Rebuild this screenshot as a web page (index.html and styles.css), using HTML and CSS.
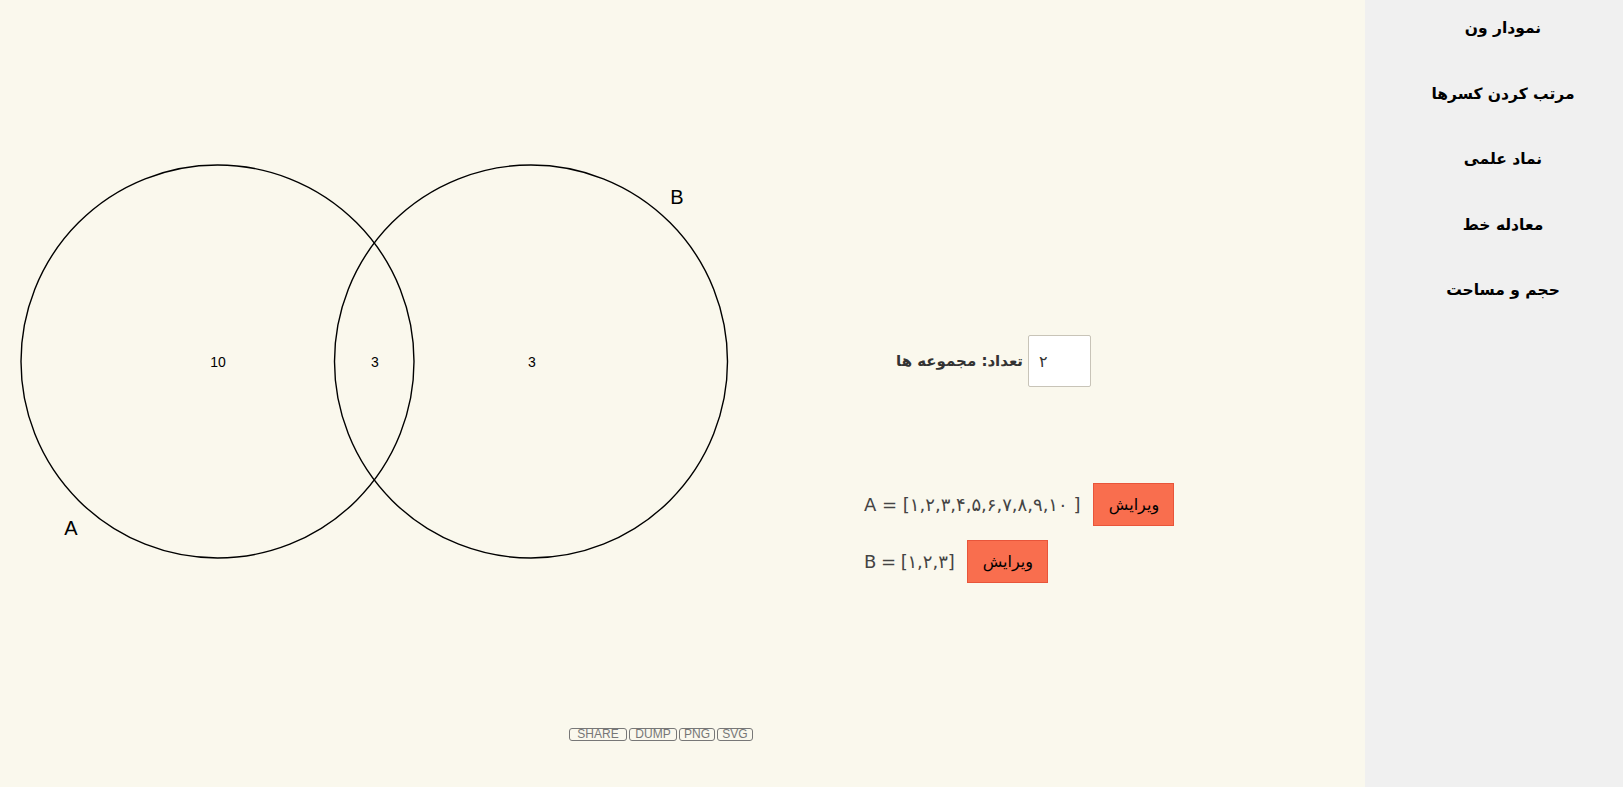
FILE: index.html
```html
<!DOCTYPE html>
<html lang="fa">
<head>
<meta charset="utf-8">
<title>نمودار ون</title>
<link rel="stylesheet" href="styles.css">
</head>
<body>
<div class="page">
  <main class="main">
    <section class="diagram">
      <svg class="venn" width="864" height="720" viewBox="0 0 864 720" xmlns="http://www.w3.org/2000/svg">
        <circle cx="217.5" cy="361.5" r="196.5" fill="none" stroke="#000" stroke-width="1.4"/>
        <circle cx="531" cy="361.5" r="196.5" fill="none" stroke="#000" stroke-width="1.4"/>
        <text x="218" y="367" class="count">10</text>
        <text x="375" y="367" class="count">3</text>
        <text x="532" y="367" class="count">3</text>
        <text x="71" y="535" class="setname">A</text>
        <text x="677" y="204" class="setname">B</text>
      </svg>
      <div class="toolbar">
        <button class="tool w58">SHARE</button>
        <button class="tool w48">DUMP</button>
        <button class="tool w36">PNG</button>
        <button class="tool w36">SVG</button>
      </div>
    </section>
    <section class="controls">
      <div class="count-row">
        <label class="count-label" dir="rtl">تعداد: مجموعه ها</label>
        <input class="count-input" type="text" value="۲">
      </div>
      <div class="sets">
        <div class="set-row">
          <span class="set-text">A = [۱,۲,۳,۴,۵,۶,۷,۸,۹,۱۰ ]</span>
          <button class="edit">ویرایش</button>
        </div>
        <div class="set-row">
          <span class="set-text set-b">B = [۱,۲,۳]</span>
          <button class="edit">ویرایش</button>
        </div>
      </div>
    </section>
  </main>
  <nav class="sidebar">
    <a class="nav-item">نمودار ون</a>
    <a class="nav-item">مرتب کردن کسرها</a>
    <a class="nav-item">نماد علمی</a>
    <a class="nav-item">معادله خط</a>
    <a class="nav-item">حجم و مساحت</a>
  </nav>
</div>
</body>
</html>
```
FILE: styles.css
```css
html, body {
  margin: 0;
  padding: 0;
}
body {
  font-family: "DejaVu Sans", "Liberation Sans", sans-serif;
  background: #faf8ed;
}
.page {
  display: flex;
  height: 787px;
  overflow: hidden;
}
.main {
  flex: 1;
  display: flex;
  background: #faf8ed;
}
.diagram {
  width: 864px;
  display: flex;
  flex-direction: column;
}
.venn {
  display: block;
}
.count {
  font-family: "Liberation Sans", Arial, sans-serif;
  font-size: 14px;
  text-anchor: middle;
  fill: #000;
}
.setname {
  font-family: "Liberation Sans", Arial, sans-serif;
  font-size: 20px;
  text-anchor: middle;
  fill: #000;
}
.toolbar {
  display: flex;
  gap: 2px;
  margin-top: 8px;
  padding-left: 569px;
}
.tool {
  height: 13px;
  padding: 0;
  border: 1px solid #777;
  border-radius: 3px;
  background: transparent;
  color: #777;
  font-family: "Liberation Sans", Arial, sans-serif;
  font-size: 12px;
  line-height: 11px;
  text-align: center;
}
.w58 { width: 58px; }
.w48 { width: 48px; }
.w36 { width: 36px; }
.controls {
  display: flex;
  flex-direction: column;
  padding-top: 335px;
}
.count-row {
  width: 227px;
  display: flex;
  justify-content: flex-end;
  align-items: center;
  gap: 5px;
}
.count-label {
  font-weight: bold;
  font-size: 15px;
  color: #333;
}
.count-input {
  box-sizing: border-box;
  width: 63px;
  height: 52px;
  border: 1px solid #c8c4b8;
  border-radius: 2px;
  background: #fff;
  padding: 0 0 0 10px;
  font-family: "DejaVu Sans", sans-serif;
  font-size: 16px;
  color: #333;
}
.sets {
  display: flex;
  flex-direction: column;
  gap: 14px;
  margin-top: 96px;
}
.set-row {
  display: flex;
  align-items: center;
  gap: 13px;
  height: 43px;
}
.set-text {
  font-size: 18px;
  color: #444;
}
.set-b {
  letter-spacing: -0.5px;
}
.edit {
  box-sizing: border-box;
  width: 81px;
  height: 43px;
  background: #f96e4e;
  border: 1px solid #e8553a;
  border-radius: 0;
  color: #000;
  font-family: "DejaVu Sans", sans-serif;
  font-size: 16px;
  padding: 0;
}
.sidebar {
  box-sizing: border-box;
  width: 258px;
  background: #f0f0f0;
  display: flex;
  flex-direction: column;
  align-items: center;
  gap: 44.5px;
  padding-top: 18px;
  padding-left: 18px;
}
.nav-item {
  font-weight: bold;
  font-size: 15.5px;
  line-height: 21px;
  color: #000;
  direction: rtl;
}
```
